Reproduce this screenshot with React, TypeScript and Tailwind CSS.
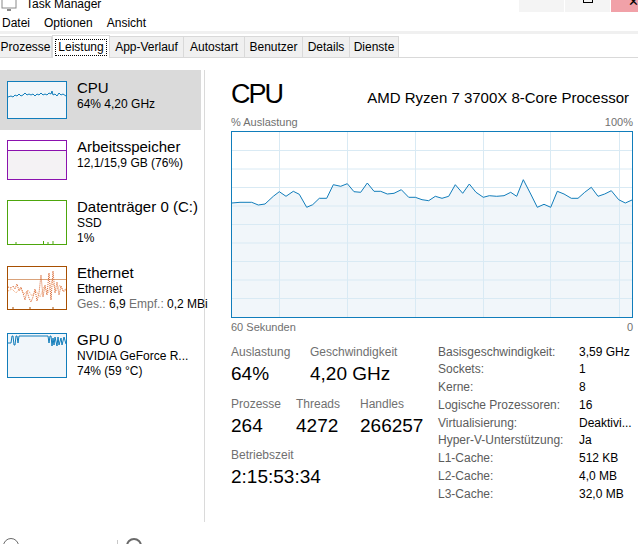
import React from "react";

const line: [number, number][] = [
  [35, 102], [60, 100], [95, 100], [115, 108], [135, 105], [160, 82], [178, 68], [198, 82],
  [220, 67], [238, 76], [260, 115], [278, 107], [298, 88], [320, 88], [340, 47], [362, 52],
  [382, 44], [402, 68], [422, 70], [442, 42], [462, 67], [482, 67], [502, 75], [522, 73],
  [544, 62], [566, 85], [586, 85], [606, 92], [626, 95], [646, 82], [666, 88], [686, 82],
  [706, 47], [728, 73], [748, 45], [768, 70], [790, 85], [808, 80], [830, 82], [852, 80],
  [872, 70], [890, 82], [910, 32], [932, 75], [952, 115], [972, 106], [992, 115], [1012, 67],
  [1032, 75], [1054, 88], [1074, 88], [1094, 70], [1114, 55], [1134, 82], [1154, 75],
  [1174, 65], [1196, 92], [1216, 102], [1238, 92],
];

const pts = line.map(([x, y]) => [x / 3 - 12, y / 3 + 37]);
const linePath = pts.map(([x, y], i) => `${i ? "L" : "M"}${x.toFixed(1)} ${y.toFixed(1)}`).join(" ");
const areaPath = `${linePath} L400 185 L0 185 Z`;

const tabs = [
  { label: "Prozesse", w: "w-[52px]" },
  { label: "Leistung", w: "w-[58px]", active: true },
  { label: "App-Verlauf", w: "w-[74px]" },
  { label: "Autostart", w: "w-[61px]" },
  { label: "Benutzer", w: "w-[58px]" },
  { label: "Details", w: "w-[47px]" },
  { label: "Dienste", w: "w-[49px]" },
];

const specs = [
  ["Basisgeschwindigkeit:", "3,59 GHz"],
  ["Sockets:", "1"],
  ["Kerne:", "8"],
  ["Logische Prozessoren:", "16"],
  ["Virtualisierung:", "Deaktivi..."],
  ["Hyper-V-Unterstützung:", "Ja"],
  ["L1-Cache:", "512 KB"],
  ["L2-Cache:", "4,0 MB"],
  ["L3-Cache:", "32,0 MB"],
];

const cpuWave =
  "M0 15 L3 14 L5 15 L7 13 L9 14 L11 12 L13 14 L15 13 L17 11 L19 13 L21 12 L23 13 L25 12 L27 14 L29 12 L31 13 L33 11 L35 13 L37 12 L39 13 L41 11 L43 12 L44 9 L45 13 L47 12 L49 14 L51 11 L53 13 L55 12 L58 14";

const CpuThumb = () => (
  <svg width="58" height="36" viewBox="0 0 58 36">
    <rect width="58" height="36" fill="#f1f6fa" />
    <path d={cpuWave} fill="none" stroke="#117dbb" strokeWidth="1" />
  </svg>
);

const MemThumb = () => (
  <svg width="58" height="38" viewBox="0 0 58 38">
    <rect width="58" height="38" fill="#fff" />
    <rect y="9" width="58" height="29" fill="#f4f2f4" />
    <line x1="0" y1="9.5" x2="58" y2="9.5" stroke="#8b12ae" strokeWidth="1" />
  </svg>
);

const DiskThumb = () => (
  <svg width="58" height="43" viewBox="0 0 58 43">
    <rect width="58" height="43" fill="#fff" />
    <g stroke="#4da60c" strokeWidth="1">
      <line x1="8" y1="41" x2="8" y2="43" />
      <line x1="35.5" y1="40" x2="35.5" y2="43" />
      <line x1="40" y1="41" x2="40" y2="43" />
      <line x1="45" y1="40" x2="45" y2="43" />
    </g>
  </svg>
);

const EthThumb = () => (
  <svg width="58" height="42" viewBox="0 0 58 42">
    <rect width="58" height="42" fill="#fff" />
    <line x1="0" y1="12.5" x2="58" y2="12.5" stroke="#d9a27a" strokeWidth="1" />
    <path
      d="M0 20 L3 21 L5 19 L7 22 L9 17 L11 24 L13 20 L15 26 L17 33 L19 24 L21 31 L23 35 L25 30 L27 22 L29 34 L31 26 L33 8 L35 30 L37 18 L39 28 L41 6 L43 33 L45 4 L47 26 L49 15 L51 28 L53 19 L55 24 L58 22"
      fill="none"
      stroke="#d9622a"
      strokeWidth="1"
      strokeDasharray="1 1"
    />
    <path
      d="M0 24 L4 22 L8 26 L12 21 L16 27 L20 23 L24 29 L28 24 L32 30 L36 20 L40 26 L44 14 L48 24 L52 18 L56 25 L58 23"
      fill="none"
      stroke="#f0a070"
      strokeWidth="1"
      strokeDasharray="1 1"
    />
    <g stroke="#a74f01" strokeWidth="1">
      <line x1="5" y1="40" x2="5" y2="42" />
      <line x1="22" y1="40" x2="22" y2="42" />
      <line x1="45" y1="40" x2="45" y2="42" />
    </g>
  </svg>
);

const GpuThumb = () => (
  <svg width="58" height="43" viewBox="0 0 58 43">
    <rect width="58" height="43" fill="#f1f6fa" />
    <path
      d="M0 9 L3 9 L4 2 L5 2 L6 11 L7 11 L8 2 L9 2 L10 9 L11 2 L40 2 L41 9 L42 2 L43 2 L44 12 L45 4 L46 11 L47 3 L49 12 L50 3 L51 11 L53 4 L54 11 L56 3 L58 10"
      fill="none"
      stroke="#117dbb"
      strokeWidth="1"
    />
  </svg>
);

const SideItem = ({
  thumb,
  border,
  title,
  lines,
  active,
  pad,
}: {
  thumb: React.ReactNode;
  border: string;
  title: string;
  lines: React.ReactNode[];
  active?: boolean;
  pad: string;
}) => (
  <div className={`flex gap-[10px] pl-[7px] ${pad} ${active ? "bg-[#dadada]" : ""}`}>
    <div className={`border ${border} self-start`}>{thumb}</div>
    <div className="flex flex-col -mt-[3px]">
      <div className="text-[15px] leading-[19px] text-black">{title}</div>
      {lines.map((l, i) => (
        <div key={i} className="text-[12px] leading-[15px] text-black whitespace-nowrap">
          {l}
        </div>
      ))}
    </div>
  </div>
);

const Stat = ({ label, value, w }: { label: string; value: string; w?: string }) => (
  <div className={w}>
    <div className="text-[12px] leading-[14px] text-[#707070]">{label}</div>
    <div className="text-[19px] leading-[24px] mt-[3px]">{value}</div>
  </div>
);

export default function App() {
  return (
    <div className="w-[638px] h-[544px] overflow-hidden bg-white font-['Liberation_Sans',Arial,sans-serif] text-black relative">
      {/* title bar */}
      <div className="h-[12px] flex justify-between overflow-hidden">
        <div className="flex items-end gap-[9px] pl-[1px] -mt-[8px]">
          <svg width="16" height="14" viewBox="0 0 16 14">
            <rect x="1" y="1" width="14" height="9" fill="#fff" stroke="#8a8a8a" />
            <rect x="6" y="11" width="4" height="2" fill="#8a8a8a" />
          </svg>
          <span className="text-[12px] leading-[16px]">Task Manager</span>
        </div>
        <div className="flex">
          <div className="w-[45px] h-[12px] bg-[#f4f4f4]" />
          <div className="w-[45px] h-[12px] bg-[#f4f4f4] ml-[1px] flex justify-center">
            <div className="w-[10px] h-[4px] border-x border-b border-black -mt-[1px]" />
          </div>
          <div className="w-[27px] h-[12px] bg-[#f1a1a8] ml-[1px] relative overflow-hidden">
            <span className="absolute left-[17px] -top-[8px] text-[13px] text-black">✕</span>
          </div>
        </div>
      </div>

      {/* menu */}
      <div className="h-[19px] flex items-center gap-[14px] pl-[2px] text-[12px] pt-[2px]">
        <span>Datei</span>
        <span>Optionen</span>
        <span>Ansicht</span>
      </div>
      <div className="h-[3px] bg-[#f0f0f0]" />

      {/* tabs */}
      <div className="h-[24px] flex items-end border-b border-[#d9d9d9]">
        {tabs.map((t) =>
          t.active ? (
            <div
              key={t.label}
              className={`${t.w} h-[23px] bg-white border border-b-0 border-[#d9d9d9] -mb-px flex items-center justify-center`}
            >
              <span className="text-[12px] leading-[15px] px-[2px] border border-dotted border-black">
                {t.label}
              </span>
            </div>
          ) : (
            <div
              key={t.label}
              className={`${t.w} h-[21px] bg-[#f0f0f0] border-r border-t border-[#d9d9d9] flex items-center justify-center text-[12px]`}
            >
              {t.label}
            </div>
          )
        )}
      </div>

      {/* content */}
      <div className="flex h-[464px]">
        <div className="w-[205px] mt-[12px] border-r border-[#dadada] flex flex-col pr-[3px]">
          <SideItem
            active
            pad="pt-[11px] pb-[11px]"
            border="border-[#117dbb]"
            thumb={<CpuThumb />}
            title="CPU"
            lines={["64% 4,20 GHz"]}
          />
          <SideItem
            pad="pt-[10px] pb-[10px]"
            border="border-[#8b12ae]"
            thumb={<MemThumb />}
            title="Arbeitsspeicher"
            lines={["12,1/15,9 GB (76%)"]}
          />
          <SideItem
            pad="pt-[10px] pb-[10px]"
            border="border-[#4da60c]"
            thumb={<DiskThumb />}
            title="Datenträger 0 (C:)"
            lines={["SSD", "1%"]}
          />
          <SideItem
            pad="pt-[10px] pb-[10px]"
            border="border-[#a74f01]"
            thumb={<EthThumb />}
            title="Ethernet"
            lines={[
              "Ethernet",
              <span key="e">
                <span className="text-[#707070]">Ges.:</span> 6,9{" "}
                <span className="text-[#707070]">Empf.:</span> 0,2 MBi
              </span>,
            ]}
          />
          <SideItem
            pad="pt-[11px] pb-[10px]"
            border="border-[#117dbb]"
            thumb={<GpuThumb />}
            title="GPU 0"
            lines={["NVIDIA GeForce R...", "74%  (59 °C)"]}
          />
        </div>

        <div className="flex-1 pl-[26px] pr-[5px] pt-[21px]">
          <div className="flex items-baseline justify-between pr-[4px]">
            <span className="text-[27px] leading-[30px] tracking-[-2px]">CPU</span>
            <span className="text-[15px]">AMD Ryzen 7 3700X 8-Core Processor</span>
          </div>
          <div className="flex justify-between text-[11px] leading-[13px] text-[#707070] mt-[6px]">
            <span>% Auslastung</span>
            <span>100%</span>
          </div>
          <div className="w-[402px] h-[187px] border border-[#117dbb] mt-[2px]">
            <svg width="400" height="185" viewBox="0 0 400 185" preserveAspectRatio="none">
              <path d={areaPath} fill="#f1f6fa" />
              <g stroke="#d9eaf4" strokeWidth="1">
                {[1, 2, 3, 4, 5, 6, 7, 8, 9].map((k) => (
                  <line key={k} x1="0" x2="400" y1={18.5 * k} y2={18.5 * k} />
                ))}
                {[47.5, 115.5, 183.5, 251.5, 318.5, 387.5].map((x) => (
                  <line key={x} x1={x} x2={x} y1="0" y2="185" />
                ))}
              </g>
              <path d={linePath} fill="none" stroke="#117dbb" strokeWidth="1" />
            </svg>
          </div>
          <div className="flex justify-between text-[11px] leading-[13px] text-[#707070] mt-[3px]">
            <span>60 Sekunden</span>
            <span>0</span>
          </div>

          <div className="flex mt-[11px]">
            <div className="w-[207px] flex flex-col">
              <div className="flex">
                <Stat w="w-[79px]" label="Auslastung" value="64%" />
                <Stat label="Geschwindigkeit" value="4,20 GHz" />
              </div>
              <div className="flex mt-[11px]">
                <Stat w="w-[65px]" label="Prozesse" value="264" />
                <Stat w="w-[64px]" label="Threads" value="4272" />
                <Stat label="Handles" value="266257" />
              </div>
              <div className="mt-[10px]">
                <Stat label="Betriebszeit" value="2:15:53:34" />
              </div>
            </div>
            <div className="flex flex-col text-[12px] leading-[17.8px] -mt-[1px]">
              {specs.map(([k, v]) => (
                <div key={k} className="flex">
                  <span className="w-[141px] text-[#5c5c5c]">{k}</span>
                  <span className="whitespace-nowrap">{v}</span>
                </div>
              ))}
            </div>
          </div>
        </div>
      </div>

      {/* footer */}
      <div className="h-[22px] flex items-start pl-[3px] pt-[16px] overflow-hidden">
        <div className="w-[16px] h-[16px] rounded-full border border-[#6a6a6a]" />
        <div className="w-px h-[8px] bg-[#c8c8c8] ml-[98px] mt-[2px]" />
        <div className="w-[16px] h-[16px] rounded-full border-2 border-[#6a6a6a] ml-[8px]" />
      </div>
    </div>
  );
}
